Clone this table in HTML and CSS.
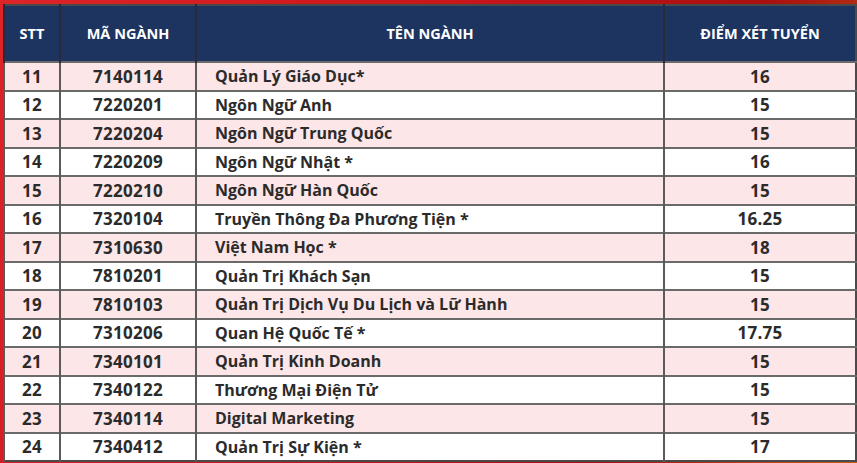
FILE: index.html
```html
<!DOCTYPE html>
<html lang="vi">
<head>
<meta charset="utf-8">
<link rel="stylesheet" href="styles.css">
</head>
<body>
<div class="frame">
<table class="scores">
<colgroup>
<col class="c-stt"><col class="c-ma"><col class="c-ten"><col class="c-diem">
</colgroup>
<thead>
<tr><th>STT</th><th>MÃ NGÀNH</th><th>TÊN NGÀNH</th><th>ĐIỂM XÉT TUYỂN</th></tr>
</thead>
<tbody>
<tr><td>11</td><td>7140114</td><td class="name">Quản Lý Giáo Dục*</td><td>16</td></tr>
<tr><td>12</td><td>7220201</td><td class="name">Ngôn Ngữ Anh</td><td>15</td></tr>
<tr><td>13</td><td>7220204</td><td class="name">Ngôn Ngữ Trung Quốc</td><td>15</td></tr>
<tr><td>14</td><td>7220209</td><td class="name">Ngôn Ngữ Nhật *</td><td>16</td></tr>
<tr><td>15</td><td>7220210</td><td class="name">Ngôn Ngữ Hàn Quốc</td><td>15</td></tr>
<tr><td>16</td><td>7320104</td><td class="name">Truyền Thông Đa Phương Tiện *</td><td>16.25</td></tr>
<tr><td>17</td><td>7310630</td><td class="name">Việt Nam Học *</td><td>18</td></tr>
<tr><td>18</td><td>7810201</td><td class="name">Quản Trị Khách Sạn</td><td>15</td></tr>
<tr><td>19</td><td>7810103</td><td class="name">Quản Trị Dịch Vụ Du Lịch và Lữ Hành</td><td>15</td></tr>
<tr><td>20</td><td>7310206</td><td class="name">Quan Hệ Quốc Tế *</td><td>17.75</td></tr>
<tr><td>21</td><td>7340101</td><td class="name">Quản Trị Kinh Doanh</td><td>15</td></tr>
<tr><td>22</td><td>7340122</td><td class="name">Thương Mại Điện Tử</td><td>15</td></tr>
<tr><td>23</td><td>7340114</td><td class="name">Digital Marketing</td><td>15</td></tr>
<tr><td>24</td><td>7340412</td><td class="name">Quản Trị Sự Kiện *</td><td>17</td></tr>
</tbody>
</table>
</div>
</body>
</html>
```
FILE: styles.css
```css
html, body {
  margin: 0;
  padding: 0;
  width: 857px;
  height: 463px;
  overflow: hidden;
}
body {
  background: linear-gradient(110deg, #dc2429 0%, #c8161b 45%, #a80f0f 75%, #c2601c 100%);
  font-family: "Open Sans", "Liberation Sans", sans-serif;
}
.frame {
  padding: 4px 2px 3px 3px;
}
.scores {
  width: 852px;
  border-collapse: collapse;
  table-layout: fixed;
  border: 2px solid #4a4a4a;
}
.c-stt { width: 56px; }
.c-ma { width: 136px; }
.c-ten { width: 468px; }
.c-diem { width: 192px; }
.scores th {
  background: #1d3461;
  color: #ffffff;
  font-size: 14.5px;
  font-weight: 700;
  height: 55px;
  padding: 0;
  text-align: center;
  border-left: 2px solid #2a2a3a;
  letter-spacing: 0;
}
.scores td {
  height: 26.5px;
  padding: 0;
  text-align: center;
  font-size: 17px;
  font-weight: 700;
  color: #2b2b2b;
  border-top: 2px solid #6a6a6a;
  border-left: 2px solid #5a5a5a;
  background: #ffffff;
  letter-spacing: 0.3px;
}
.scores tbody tr:nth-child(odd) td {
  background: #fde6e7;
}
.scores td.name {
  text-align: left;
  padding-left: 18px;
  font-size: 16px;
  letter-spacing: 0;
}
```
